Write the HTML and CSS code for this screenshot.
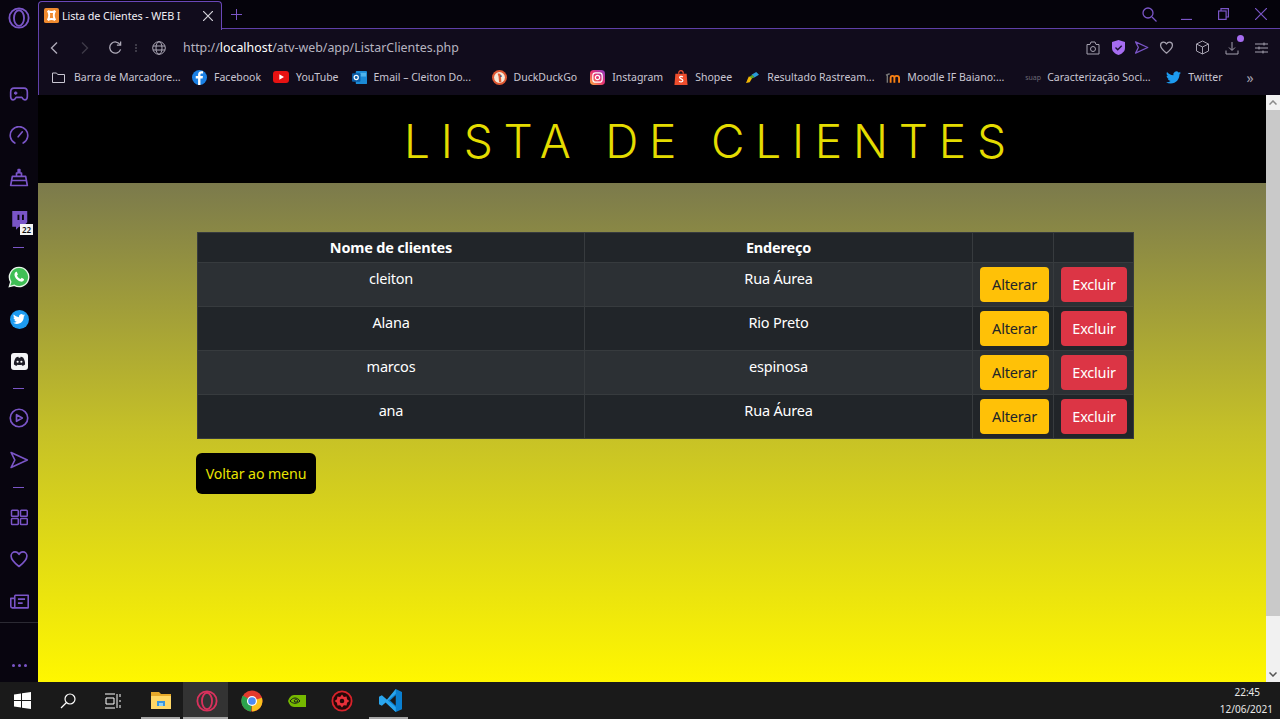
FILE: index.html
```html
<!DOCTYPE html>
<html lang="pt-BR">
<head>
    <meta charset="UTF-8">
    <meta name="viewport" content="width=device-width, initial-scale=1.0">
    <title>Lista de Clientes - WEB I</title>
    <link rel="stylesheet" href="styles.css">
</head>
<body>
    <svg class="defs" width="0" height="0">
        <symbol id="bird" viewBox="0 0 24 24"><path fill="currentColor" d="M23.95 4.57a10 10 0 01-2.82.77 4.96 4.96 0 002.16-2.72c-.95.55-2 .95-3.12 1.18a4.92 4.92 0 00-8.38 4.48C7.69 8.1 4.07 6.13 1.64 3.16a4.82 4.82 0 00-.67 2.48c0 1.71.87 3.21 2.19 4.1a4.9 4.9 0 01-2.23-.61v.06c0 2.39 1.7 4.38 3.95 4.83a5 5 0 01-2.21.08 4.94 4.94 0 004.6 3.42A9.87 9.87 0 010 19.54a13.94 13.94 0 007.55 2.21c9.05 0 14-7.5 14-13.98 0-.21 0-.42-.02-.63a9.94 9.94 0 002.46-2.55z"/></symbol>
        <symbol id="heart" viewBox="0 0 24 24"><path fill="none" stroke="currentColor" stroke-width="2" stroke-linejoin="round" d="M12 21C6 16.5 2.500 13 2.500 8.500 2.500 5.500 4.800 3.500 7.300 3.500c2 0 3.700 1 4.700 3 1-2 2.700-3 4.700-3 2.500 0 4.800 2 4.800 5 0 4.500-3.500 8-9.500 12.500z"/></symbol>
        <symbol id="send" viewBox="0 0 24 24"><path fill="none" stroke="currentColor" stroke-width="2" stroke-linejoin="round" d="M2.500 3 22 12 2.500 21 7 12z"/></symbol>
    </svg>

    <div class="screen">
        <div class="window">
            <aside class="sidebar">
                <svg class="side-logo" width="22" height="22" viewBox="0 0 24 24" fill="none" stroke="currentColor" stroke-width="2"><circle cx="12" cy="12" r="10.500"/><ellipse cx="12" cy="12" rx="5.500" ry="8.500"/></svg>
                <div class="side-item side-first">
                    <svg width="20" height="20" viewBox="0 0 24 24" fill="none" stroke="currentColor" stroke-width="2" stroke-linejoin="round"><path d="M6 5h12c2.500 0 4 2 4 5v5c0 2.500-1 4-3 4-1.500 0-2.500-1-3.500-3h-7C7.500 18 6.500 19 5 19c-2 0-3-1.500-3-4v-5c0-3 1.500-5 4-5z"/><path d="M6 11h4M8 9v4M15 10h.1M18 13h.1"/></svg>
                </div>
                <div class="side-item">
                    <svg width="20" height="20" viewBox="0 0 24 24" fill="none" stroke="currentColor" stroke-width="2" stroke-linecap="round"><path d="M7 20.500A10.500 10.500 0 1 1 17 20.500"/><path d="M11 13l5-6"/></svg>
                </div>
                <div class="side-item">
                    <svg width="20" height="20" viewBox="0 0 24 24" fill="none" stroke="currentColor" stroke-width="2" stroke-linejoin="round"><path d="M4 10h16l2 11H2z"/><path d="M3 15h18M9 10V6h2V2h2v4h2v4"/></svg>
                </div>
                <div class="side-item side-badged">
                    <svg width="18" height="20" viewBox="0 0 24 26"><path fill="currentColor" d="M3 1h20v15l-6 6h-5l-4 4v-4H3z"/><path fill="#08050f" d="M10 6h2.500v7H10zM16 6h2.500v7H16z"/></svg>
                    <span class="side-badge">22</span>
                </div>
                <div class="side-sep"></div>
                <div class="side-item">
                    <svg width="22" height="22" viewBox="0 0 24 24"><path fill="#3fbf55" stroke="#e9f7ea" stroke-width="1.500" d="M12 1.500A10.500 10.500 0 0 0 3 17.300L1.500 22.500l5.400-1.400A10.500 10.500 0 1 0 12 1.500z"/><path fill="#fff" d="M8.500 6.500c-.8.500-1.700 2-1.300 3.800.6 2.800 3.500 6 6.700 6.700 1.500.300 3-.5 3.400-1.500.2-.7.200-1.200 0-1.400l-2.400-1.200-1.100 1.300c-1.800-.6-3.300-2-4-3.900l1-1.100L9.800 6.700c-.3-.4-.8-.4-1.300-.2z"/></svg>
                </div>
                <div class="side-item">
                    <span class="round-icon"><svg width="12" height="12"><use href="#bird"/></svg></span>
                </div>
                <div class="side-item">
                    <span class="discord-icon">
                        <svg width="13" height="11" viewBox="0 0 24 20"><path fill="#1d1b26" d="M5 3c2-1.200 4-1.700 5-1.800L10.500 3h3l.5-1.800c1 .1 3 .6 5 1.800 2.500 4 3.500 8 3.300 12.500-1.800 1.400-3.700 2.200-5.300 2.500l-1.200-2c-2.500.6-5 .6-7.500 0L7 18c-1.600-.3-3.500-1.100-5.300-2.500C1.500 11 2.500 7 5 3z"/><circle cx="8.500" cy="10.500" r="2" fill="#fff"/><circle cx="15.500" cy="10.500" r="2" fill="#fff"/></svg>
                    </span>
                </div>
                <div class="side-sep"></div>
                <div class="side-item">
                    <svg width="20" height="20" viewBox="0 0 24 24" fill="none" stroke="currentColor" stroke-width="2" stroke-linejoin="round"><circle cx="12" cy="12" r="10.500"/><path d="M9 8l7 4-7 4z"/></svg>
                </div>
                <div class="side-item">
                    <svg width="20" height="20"><use href="#send"/></svg>
                </div>
                <div class="side-sep"></div>
                <div class="side-item">
                    <svg width="18" height="18" viewBox="0 0 24 24" fill="none" stroke="currentColor" stroke-width="2"><rect x="2" y="3" width="9" height="8" rx="1"/><rect x="14" y="3" width="9" height="8" rx="1"/><rect x="2" y="14" width="9" height="8" rx="1"/><rect x="14" y="14" width="9" height="8" rx="1"/></svg>
                </div>
                <div class="side-item">
                    <svg width="20" height="20"><use href="#heart"/></svg>
                </div>
                <div class="side-item">
                    <svg width="19" height="19" viewBox="0 0 24 24" fill="none" stroke="currentColor" stroke-width="2" stroke-linejoin="round"><path d="M6 4h17v16H3c-1 0-2-1-2-2V8h5"/><path d="M6 4v16M10 9h9M10 14h6"/></svg>
                </div>
                <div class="side-foot">
                    <span></span><span></span><span></span>
                </div>
            </aside>

            <div class="browser">
                <div class="tabstrip">
                    <div class="tab">
                        <svg class="tab-fav" width="15" height="15" viewBox="0 0 16 16"><rect width="16" height="16" rx="2" fill="#ef8a2e"/><path fill="none" stroke="#fff" stroke-width="2" d="M4 3c3 2 5 2 8 0M4 13c3-2 5-2 8 0M4 3c2 3 2 7 0 10M12 3c-2 3-2 7 0 10"/></svg>
                        <span class="tab-title">Lista de Clientes - WEB I</span>
                        <svg class="tab-close" width="10" height="10" viewBox="0 0 10 10" stroke="currentColor" stroke-width="1.200"><path d="M0 0l10 10M10 0L0 10"/></svg>
                    </div>
                    <svg class="tab-new" width="11" height="11" viewBox="0 0 11 11" stroke="currentColor"><path d="M5.500 0v11M0 5.500h11"/></svg>
                    <div class="win-controls">
                        <svg class="ctl-search" width="15" height="15" viewBox="0 0 15 15" fill="none" stroke="currentColor" stroke-width="1.300"><circle cx="6" cy="6" r="5"/><path d="M10 10l4.500 4.500"/></svg>
                        <svg class="ctl-min" width="11" height="11" viewBox="0 0 11 11" stroke="currentColor" stroke-width="1.300"><path d="M0 10.500h11"/></svg>
                        <svg class="ctl-max" width="11" height="12" viewBox="0 0 11 12" fill="none" stroke="currentColor" stroke-width="1.200"><rect x=".6" y="3" width="7.500" height="8.400"/><path d="M3 3V.6h7.400V9H8"/></svg>
                        <svg class="ctl-close" width="12" height="12" viewBox="0 0 12 12" stroke="currentColor" stroke-width="1.200"><path d="M0 0l12 12M12 0L0 12"/></svg>
                    </div>
                </div>

                <div class="toolbar">
                    <svg class="nav-back" width="8" height="12" viewBox="0 0 8 12" fill="none" stroke="currentColor" stroke-width="1.400"><path d="M7 0.500L1.500 6 7 11.500"/></svg>
                    <svg class="nav-fwd" width="8" height="12" viewBox="0 0 8 12" fill="none" stroke="currentColor" stroke-width="1.400"><path d="M1 0.500L6.500 6 1 11.500"/></svg>
                    <svg class="nav-reload" width="13" height="13" viewBox="0 0 14 14" fill="none" stroke="currentColor" stroke-width="1.400"><path d="M12.500 9a6 6 0 1 1-.5-5"/><path d="M12.500 0.500V4.500H8.500"/></svg>
                    <span class="nav-dots"></span>
                    <svg class="nav-globe" width="14" height="14" viewBox="0 0 14 14" fill="none" stroke="currentColor"><circle cx="7" cy="7" r="6.300"/><ellipse cx="7" cy="7" rx="3" ry="6.300"/><path d="M1 5h12M1 9h12"/></svg>
                    <div class="url">http://<b>localhost</b>/atv-web/app/ListarClientes.php</div>
                    <div class="tool-icons">
                        <svg class="ti-camera" width="14" height="14" viewBox="0 0 14 14" fill="none" stroke="currentColor"><path d="M1 3.500h3L5 1h4l1 2.500h3V13H1z"/><circle cx="7" cy="8" r="2.500"/></svg>
                        <svg class="ti-shield" width="13" height="15" viewBox="0 0 13 15"><path fill="#a66cf0" d="M6.500 0L13 2v6c0 3.500-3 5.800-6.500 7C3 13.800 0 11.500 0 8V2z"/><path fill="none" stroke="#1a1030" stroke-width="1.400" d="M3.500 7.500l2.200 2.200 4-4"/></svg>
                        <svg class="ti-send" width="15" height="15"><use href="#send"/></svg>
                        <svg class="ti-heart" width="15" height="15"><use href="#heart"/></svg>
                        <svg class="ti-cube" width="15" height="15" viewBox="0 0 15 15" fill="none" stroke="currentColor"><path d="M7.500 1L13.500 4v7l-6 3-6-3V4zM1.500 4l6 3 6-3M7.500 7v7"/></svg>
                        <span class="ti-download">
                            <svg width="14" height="14" viewBox="0 0 14 14" fill="none" stroke="currentColor"><path d="M7 1v8M4 6.500L7 9.500 10 6.500M1 9.500v3.500h12V9.500"/></svg>
                            <i class="ti-dot"></i>
                        </span>
                        <svg class="ti-settings" width="13" height="12" viewBox="0 0 13 12" stroke="currentColor"><path d="M0 2h13M0 6h13M0 10h13M9 .5v3M4 4.500v3M8 8.500v3"/></svg>
                    </div>
                </div>

                <div class="bookmarks">
                    <div class="bm bm-folder">
                        <svg width="13" height="11" viewBox="0 0 13 11" fill="none" stroke="#c9c6d2"><path d="M.5 1h4l1.200 1.500h6.800v8H.5z"/></svg>
                        <span class="bm-label bm-w107">Barra de Marcadore...</span>
                    </div>
                    <div class="bm">
                        <svg width="15" height="15" viewBox="0 0 16 16"><circle cx="8" cy="8" r="8" fill="#1a80e5"/><path fill="#fff" d="M9 16V9h2.300l.4-2.600H9V5c0-.8.300-1.300 1.300-1.300h1.500V1.400C11.400 1.300 10.700 1.200 10 1.200 8 1.200 6.500 2.500 6.500 4.700v1.700H4V9h2.500v7z"/></svg>
                        <span class="bm-label">Facebook</span>
                    </div>
                    <div class="bm bm-gap-yt">
                        <svg width="16" height="12" viewBox="0 0 16 12"><rect width="16" height="12" rx="3" fill="#e61212"/><path fill="#fff" d="M6.300 3.300L11 6 6.300 8.700z"/></svg>
                        <span class="bm-label">YouTube</span>
                    </div>
                    <div class="bm bm-gap-outlook">
                        <svg width="15" height="15" viewBox="0 0 16 16"><rect x="4" y="1" width="12" height="14" rx="1" fill="#1b8ad6"/><rect x="9" y="3" width="6" height="4" fill="#50b4ec"/><rect y="3.500" width="9" height="9" rx="1" fill="#0b5ea8"/><circle cx="4.500" cy="8" r="2.200" fill="none" stroke="#fff" stroke-width="1.300"/></svg>
                        <span class="bm-label bm-w100">Email – Cleiton Do...</span>
                    </div>
                    <div class="bm bm-gap-ddg">
                        <svg width="15" height="15" viewBox="0 0 16 16"><circle cx="8" cy="8" r="8" fill="#de5833"/><circle cx="8" cy="8" r="5.800" fill="#f4e9d8"/><path fill="#de5833" d="M6 4c2-1 3.500 0 3.500 2L10 13H7.500L7 7z"/><circle cx="9.500" cy="6.500" r="1" fill="#2d4f8e"/></svg>
                        <span class="bm-label">DuckDuckGo</span>
                    </div>
                    <div class="bm bm-gap-insta">
                        <svg width="15" height="15" viewBox="0 0 16 16"><defs><linearGradient id="ig" x1="0" y1="1" x2="1" y2="0"><stop offset="0" stop-color="#fdb33c"/><stop offset=".5" stop-color="#e8336f"/><stop offset="1" stop-color="#8a3ac8"/></linearGradient></defs><rect width="16" height="16" rx="4" fill="url(#ig)"/><rect x="3" y="3" width="10" height="10" rx="3" fill="none" stroke="#fff" stroke-width="1.300"/><circle cx="8" cy="8" r="2.300" fill="none" stroke="#fff" stroke-width="1.300"/></svg>
                        <span class="bm-label">Instagram</span>
                    </div>
                    <div class="bm">
                        <svg width="14" height="15" viewBox="0 0 14 16"><path fill="#ee4d2d" d="M1 4h12l1 12H0z"/><path fill="none" stroke="#ee4d2d" stroke-width="1.200" d="M4.500 4c0-4.500 5-4.500 5 0"/><path fill="none" stroke="#fff" stroke-width="1.300" d="M9 7.500c-1-1-3.500-1-3.500.5S9 9.500 9 11.300s-3 1.500-4 .5"/></svg>
                        <span class="bm-label">Shopee</span>
                    </div>
                    <div class="bm bm-gap-rast">
                        <svg width="15" height="13" viewBox="0 0 16 14"><path fill="#f2b705" d="M1 13l3-7 4 1-3 5z"/><path fill="#2a9bd8" d="M7 4l5-3 3 3-5 3z"/><path fill="#5aa632" d="M5 6l3-2 2 3-3 1z"/></svg>
                        <span class="bm-label bm-w106">Resultado Rastream...</span>
                    </div>
                    <div class="bm bm-gap-moodle">
                        <svg width="15" height="11" viewBox="0 0 16 11" fill="none" stroke-width="2"><path stroke="#f98012" d="M6 11V6c0-3 4-3 4 0v5M10 6c0-3 5-3 5 0v5"/><path stroke="#777" stroke-width="1.500" d="M1 3l4-1.500M2.500 3v8"/></svg>
                        <span class="bm-label bm-w98">Moodle IF Baiano:...</span>
                    </div>
                    <div class="bm bm-gap-suap">
                        <span class="bm-suap">suap</span>
                        <span class="bm-label bm-w105">Caracterização Soci...</span>
                    </div>
                    <div class="bm bm-gap-tw">
                        <svg class="bm-bird" width="15" height="15"><use href="#bird"/></svg>
                        <span class="bm-label">Twitter</span>
                    </div>
                    <span class="bm-more">»</span>
                </div>

                <div class="viewport">
                    <main class="page">
                        <header class="page-head">
                            <h1>LISTA DE CLIENTES</h1>
                        </header>
                        <section class="content">
                            <table class="clients">
                                <colgroup>
                                    <col class="col-name"><col class="col-addr"><col class="col-edit"><col class="col-del">
                                </colgroup>
                                <thead>
                                    <tr><th>Nome de clientes</th><th>Endereço</th><th></th><th></th></tr>
                                </thead>
                                <tbody>
                                    <tr>
                                        <td>cleiton</td><td>Rua Áurea</td>
                                        <td><a class="btn btn-warning" href="#">Alterar</a></td>
                                        <td><a class="btn btn-danger" href="#">Excluir</a></td>
                                    </tr>
                                    <tr>
                                        <td>Alana</td><td>Rio Preto</td>
                                        <td><a class="btn btn-warning" href="#">Alterar</a></td>
                                        <td><a class="btn btn-danger" href="#">Excluir</a></td>
                                    </tr>
                                    <tr>
                                        <td>marcos</td><td>espinosa</td>
                                        <td><a class="btn btn-warning" href="#">Alterar</a></td>
                                        <td><a class="btn btn-danger" href="#">Excluir</a></td>
                                    </tr>
                                    <tr>
                                        <td>ana</td><td>Rua Áurea</td>
                                        <td><a class="btn btn-warning" href="#">Alterar</a></td>
                                        <td><a class="btn btn-danger" href="#">Excluir</a></td>
                                    </tr>
                                </tbody>
                            </table>
                            <a class="btn-back" href="#">Voltar ao menu</a>
                        </section>
                    </main>
                    <div class="scrollbar">
                        <span class="sb-arrow"><svg width="8" height="5" viewBox="0 0 8 5" fill="none" stroke="#8a8a8a" stroke-width="1.500"><path d="M.5 4.500L4 1l3.500 3.500"/></svg></span>
                        <span class="sb-thumb"></span>
                        <span class="sb-arrow sb-end"><svg width="8" height="5" viewBox="0 0 8 5" fill="none" stroke="#555" stroke-width="1.500"><path d="M.5.500L4 4 7.500.500"/></svg></span>
                    </div>
                </div>
            </div>
        </div>

        <footer class="taskbar">
            <div class="task task-plain">
                <svg width="17" height="17" viewBox="0 0 17 17" fill="#fff"><path d="M0 2.500l7-1v6.500H0zM8 1.300L17 0v8H8zM0 9h7v6.500l-7-1zM8 9h9v8l-9-1.300z"/></svg>
            </div>
            <div class="task task-plain">
                <svg width="16" height="16" viewBox="0 0 16 16" fill="none" stroke="#fff" stroke-width="1.200"><circle cx="10" cy="6" r="5"/><path d="M6.500 9.500L1 15"/></svg>
            </div>
            <div class="task task-plain">
                <svg width="17" height="16" viewBox="0 0 17 16" fill="none" stroke="#fff"><path d="M1 1h10M1 15h10M2 5h8v6H2zM13 1v14M16 1v3M16 7v2M16 12v3" /></svg>
            </div>
            <div class="task task-open task-files">
                <svg width="20" height="17" viewBox="0 0 20 17"><path fill="#e5a82a" d="M0 0h8l2 2h10v15H0z"/><path fill="#ffd766" d="M0 4h20v13H0z"/><path fill="#3a96dd" d="M6 9h8v5H6z"/><path fill="#8fd0f5" d="M8 11h4v3H8z"/></svg>
            </div>
            <div class="task task-open task-active task-pad">
                <svg width="22" height="22" viewBox="0 0 24 24" fill="none" stroke="#d9315c" stroke-width="2"><circle cx="12" cy="12" r="10.500"/><ellipse cx="12" cy="12" rx="5.500" ry="9"/></svg>
            </div>
            <div class="task task-pad">
                <svg width="22" height="22" viewBox="0 0 24 24"><circle cx="12" cy="12" r="11.500" fill="#e33b2e"/><path fill="#f9c11e" d="M12 12l10.800-3.500A11.500 11.500 0 0 1 12 23.500z"/><path fill="#2ba24c" d="M12 12l-1 11.500A11.500 11.500 0 0 1 2 6z"/><circle cx="12" cy="12" r="5.500" fill="#fff"/><circle cx="12" cy="12" r="4.200" fill="#4c8bf5"/></svg>
            </div>
            <div class="task task-pad">
                <svg width="18" height="13" viewBox="0 0 18 13"><path fill="#76b900" d="M6 1h12v12H6c-3 0-5-3-6-6 1-3 3-6 6-6z"/><path fill="none" stroke="#1a1a1a" d="M2 7c3-4 7-4 10 0-3 3-7 3-10 0zM6 7c1-2 3-2 4 0-1 1.500-3 1.500-4 0z"/></svg>
            </div>
            <div class="task task-pad">
                <svg width="22" height="22" viewBox="0 0 24 24"><circle cx="12" cy="12" r="10.500" fill="#260808" stroke="#d8222a" stroke-width="2"/><path fill="#e8303a" d="M12 5l2 2.500 3-.5.5 3 2.500 2-2.500 2-.5 3-3-.5-2 2.500-2-2.500-3 .5-.5-3L4 12l2.500-2 .5-3 3 .5z"/><circle cx="12" cy="12" r="2.500" fill="#260808"/></svg>
            </div>
            <div class="task task-open task-pad task-code">
                <svg width="23" height="23" viewBox="0 0 24 24"><path fill="#0a7fd0" d="M17.500 0L24 3v18l-6.500 3L7 14l3-3z"/><path fill="#2aa6ee" d="M17.500 0v24L7 14 3 17.500 0 16V8l3-1.500L17.500 19V5L3 17.500"/><path fill="#1a1a1a" d="M17.500 6.500L11.500 12l6 5.500z"/></svg>
            </div>
            <div class="clock">
                <span>22:45</span>
                <span>12/06/2021</span>
            </div>
        </footer>
    </div>
</body>
</html>
```

FILE: styles.css
```css
* { box-sizing: border-box; }
body { margin: 0; height: 719px; overflow: hidden; font-family: "Noto Sans", "Open Sans", sans-serif; background: #000; }
svg { display: block; flex: none; }
.defs { position: absolute; }

.screen { height: 719px; display: flex; flex-direction: column; }
.window { height: 682px; display: flex; }

/* opera sidebar */
.sidebar { width: 38px; flex: none; background: #08050f; color: #7a55c7; display: flex; flex-direction: column; align-items: center; }
.side-logo { margin-top: 7px; }
.side-item { height: 42px; width: 100%; display: flex; align-items: center; justify-content: center; position: relative; flex: none; }
.side-first { margin-top: 44px; }
.side-sep { height: 15px; width: 100%; flex: none; position: relative; }
.side-sep::after { content: ""; position: absolute; left: 13px; top: 6px; width: 11px; height: 1px; background: #7a55c7; }
.side-badge { position: absolute; left: 20px; top: 25px; width: 13px; height: 11px; background: #f4f4f4; color: #111; font-size: 8px; line-height: 11px; text-align: center; font-weight: 600; }
.round-icon { width: 19px; height: 19px; border-radius: 50%; background: #1d9bf0; color: #fff; display: flex; align-items: center; justify-content: center; }
.discord-icon { width: 17px; height: 17px; border-radius: 3px; background: #f4f4f6; display: flex; align-items: center; justify-content: center; }
.side-foot { margin-top: auto; width: 100%; height: 62px; border-top: 1px solid #2b2a33; display: flex; justify-content: center; gap: 3px; padding-top: 41px; }
.side-foot span { width: 3px; height: 3px; background: #7a55c7; border-radius: 50%; }

/* browser chrome */
.browser { flex: 1; min-width: 0; display: flex; flex-direction: column; }
.tabstrip { height: 29px; flex: none; background: #05030b; display: flex; align-items: center; position: relative; border-bottom: 1px solid #5f3fa8; }
.tab { width: 184px; height: 29px; margin-bottom: -1px; margin-top: 1px; background: #110c1c; border: 1px solid #6a47b8; border-bottom: none; border-radius: 4px 4px 0 0; display: flex; align-items: center; padding-left: 5px; color: #f0eef4; }
.tab-fav { margin-right: 3px; }
.tab-title { font-size: 10.800px; letter-spacing: -.1px; width: 125px; white-space: nowrap; }
.tab-close { margin-left: 16px; color: #d5d3da; }
.tab-new { margin-left: 9px; color: #7a55c7; }
.win-controls { margin-left: auto; display: flex; align-items: center; color: #7a55c7; height: 100%; padding-right: 13px; }
.ctl-search { margin-right: 1px; }
.ctl-min { margin-left: 23px; }
.ctl-max { margin-left: 26px; }
.ctl-close { margin-left: 26px; }

.toolbar { height: 37px; flex: none; background: #110c1c; border-left: 1px solid #5f3fa8; display: flex; align-items: center; color: #aeaab8; padding-left: 11px; }
.nav-fwd { margin-left: 23px; color: #3d3a47; }
.nav-reload { margin-left: 20px; }
.nav-dots { width: 2px; height: 8px; margin-left: 13px; border-left: 2px dotted #3d3a47; }
.nav-globe { margin-left: 15px; }
.url { margin-left: 17px; font-size: 12.400px; color: #b7b4c0; white-space: nowrap; }
.url b { font-weight: 400; color: #fff; }
.tool-icons { margin-left: auto; display: flex; align-items: center; padding-right: 12px; color: #a5a1af; }
.ti-camera { margin-right: 1px; }
.ti-shield { margin-left: 11px; }
.ti-send { margin-left: 9px; color: #7a55c7; }
.ti-heart { margin-left: 10px; }
.ti-cube { margin-left: 21px; }
.ti-download { margin-left: 15px; position: relative; }
.ti-dot { position: absolute; right: -5px; top: -6px; width: 7px; height: 7px; border-radius: 50%; background: #a66cf0; }
.ti-settings { margin-left: 16px; }

.bookmarks { height: 29px; flex: none; background: #110c1c; border-left: 1px solid #5f3fa8; display: flex; align-items: center; padding: 0 0 7px 13px; gap: 11px; font-size: 10.500px; color: #c9c6d2; white-space: nowrap; }
.bm { display: flex; align-items: center; gap: 7px; }
.bm-folder { gap: 9px; }
.bm-label { display: block; }
.bm-w107 { width: 107px; }
.bm-w100 { width: 100px; }
.bm-w106 { width: 106px; }
.bm-w98 { width: 98px; }
.bm-w105 { width: 105px; }
.bm-gap-yt { margin-left: 1px; }
.bm-gap-outlook { margin-left: 2px; }
.bm-gap-ddg { margin-left: 7px; }
.bm-gap-insta { margin-left: 2px; }
.bm-gap-rast { margin-left: 2px; }
.bm-gap-moodle { margin-left: 1px; }
.bm-gap-suap { margin-left: 9px; }
.bm-gap-tw { margin-left: 3px; }
.bm-suap { width: 15px; font-size: 7px; color: #6b6875; }
.bm-bird { color: #1d9bf0; }
.bm-more { margin-left: 13px; font-size: 14px; color: #a5a1af; }

/* page */
.viewport { flex: 1; min-height: 0; display: flex; }
.page { flex: 1; min-width: 0; display: flex; flex-direction: column; }
.page-head { height: 88px; flex: none; background: #000; display: flex; align-items: center; padding: 3px 0 0 366px; }
.page-head h1 { margin: 0; font-family: Inter, sans-serif; font-weight: 300; font-size: 46px; line-height: 1; letter-spacing: 10.800px; color: #e4dc00; white-space: nowrap; }
.content { flex: 1; padding: 49px 132px 0 159px; background: linear-gradient(to bottom, #7b7a4c, #c6c127 50%, #fff700); }

.clients { width: 936px; table-layout: fixed; border-collapse: collapse; background: #212529; color: #fff; font-size: 14.500px; letter-spacing: -.2px; border: 1px solid #373b3e; }
.col-name { width: 387px; }
.col-addr { width: 388px; }
.col-edit { width: 81px; }
.col-del { width: 80px; }
.clients th, .clients td { padding: 4px 7px; border: 1px solid #373b3e; text-align: center; vertical-align: top; }
.clients th { height: 29px; line-height: 21px; font-weight: 700; }
.clients td { height: 44px; line-height: 22px; }
.clients tbody tr:nth-child(odd) td { background: #2c3034; }

.btn { display: inline-block; height: 35px; line-height: 35px; border-radius: 4px; text-decoration: none; text-align: center; vertical-align: top; }
.btn-warning { width: 69px; background: #ffc107; color: #212529; }
.btn-danger { width: 66px; background: #dc3545; color: #fff; }

.btn-back { display: block; width: 120px; height: 41px; margin: 14px 0 0 -1px; line-height: 41px; text-align: center; background: #000; color: #e8e400; border-radius: 6px; text-decoration: none; font-size: 14.200px; letter-spacing: -.1px; }

.scrollbar { width: 14px; flex: none; background: #f1f1f1; display: flex; flex-direction: column; }
.sb-arrow { height: 15px; flex: none; display: flex; align-items: center; justify-content: center; }
.sb-thumb { height: 506px; flex: none; background: #c9c9c9; }
.sb-end { margin-top: auto; }

/* windows taskbar */
.taskbar { height: 37px; flex: none; background: #1a1a1a; display: flex; align-items: center; }
.task { width: 45px; height: 37px; flex: none; display: flex; align-items: center; justify-content: center; position: relative; }
.task-pad { padding-left: 3px; }
.task-files { margin-left: 3px; }
.task-code { margin-left: 3px; }
.task-open::after { content: ""; position: absolute; left: 3px; right: 3px; bottom: 0; height: 2px; background: #a6a6a6; }
.task-active { background: #333; }
.task-active::after { left: 0; right: 0; }
.clock { margin-left: auto; padding-right: 7px; display: flex; flex-direction: column; align-items: flex-end; font-size: 10px; line-height: 17px; color: #e8e8e8; }
.clock span:first-child { padding-right: 13px; }
```
